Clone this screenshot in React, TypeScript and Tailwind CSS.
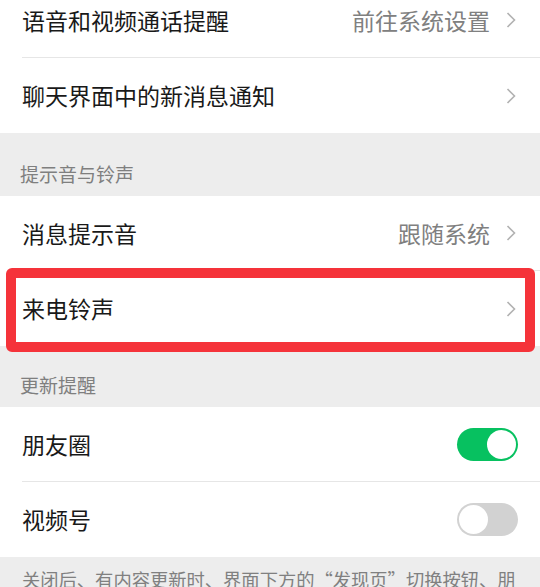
import React from "react";

const font = { fontFamily: '"Noto Sans CJK SC", "Noto Sans", sans-serif' };

function Chevron() {
  return (
    <svg width="11" height="16" viewBox="0 0 11 16" className="shrink-0">
      <path d="M1.5 1 L8.5 8 L1.5 15" fill="none" stroke="#b2b2b2" strokeWidth="1.6" />
    </svg>
  );
}

function Toggle({ on }: { on: boolean }) {
  return on ? (
    <div className="flex h-[33px] w-[61px] items-center justify-end rounded-full bg-[#07c160] p-[2px]">
      <div className="h-[29px] w-[29px] rounded-full bg-white" />
    </div>
  ) : (
    <div className="flex h-[33px] w-[61px] items-center justify-start rounded-full bg-[#d2d2d2] p-[2px]">
      <div className="h-[29px] w-[29px] rounded-full bg-white" />
    </div>
  );
}

interface RowProps {
  label: string;
  value?: string;
  chevron?: boolean;
  toggle?: boolean;
  divider?: boolean;
}

function Row({ label, value, chevron, toggle, divider }: RowProps) {
  return (
    <div className="bg-white pl-[22px]">
      <div
        className={`flex h-[75px] items-center ${toggle !== undefined ? "pr-[22px]" : "pr-[23px]"} ${
          divider ? "border-b border-[#e6e6e6]" : ""
        }`}
      >
        <span className="flex-1 text-[23px] text-[#191919]">{label}</span>
        {value && <span className="mr-[16px] text-[23px] text-[#808080]">{value}</span>}
        {chevron && <Chevron />}
        {toggle !== undefined && <Toggle on={toggle} />}
      </div>
    </div>
  );
}

function SectionHeader({ title, h }: { title: string; h: string }) {
  return (
    <div className={`flex items-end bg-[#ededed] px-[20px] pb-[8px] ${h}`}>
      <span className="text-[19px] text-[#7f7f7f]">{title}</span>
    </div>
  );
}

export default function App() {
  return (
    <div className="h-[587px] w-[540px] overflow-hidden bg-[#ededed]" style={font}>
      <div className="-mt-[17px]">
        <Row label="语音和视频通话提醒" value="前往系统设置" chevron divider />
        <Row label="聊天界面中的新消息通知" chevron />
        <SectionHeader title="提示音与铃声" h="h-[63px]" />
        <Row label="消息提示音" value="跟随系统" chevron divider />
        <div className="relative">
          <Row label="来电铃声" chevron />
          {/* red highlight box */}
          <div className="pointer-events-none absolute left-[6px] right-[5px] -top-[3px] -bottom-[6px] rounded-[6px] border-[10px] border-[#f5333a]" />
        </div>
        <SectionHeader title="更新提醒" h="h-[61px]" />
        <Row label="朋友圈" toggle={true} divider />
        <Row label="视频号" toggle={false} />
        <div className="px-[22px] pt-[8px] text-[18.3px] leading-[28px] text-[#808080]">
          关闭后、有内容更新时、界面下方的“发现页”切换按钮、朋友圈和视频号入口将不再出现红点提示。
        </div>
      </div>
    </div>
  );
}
